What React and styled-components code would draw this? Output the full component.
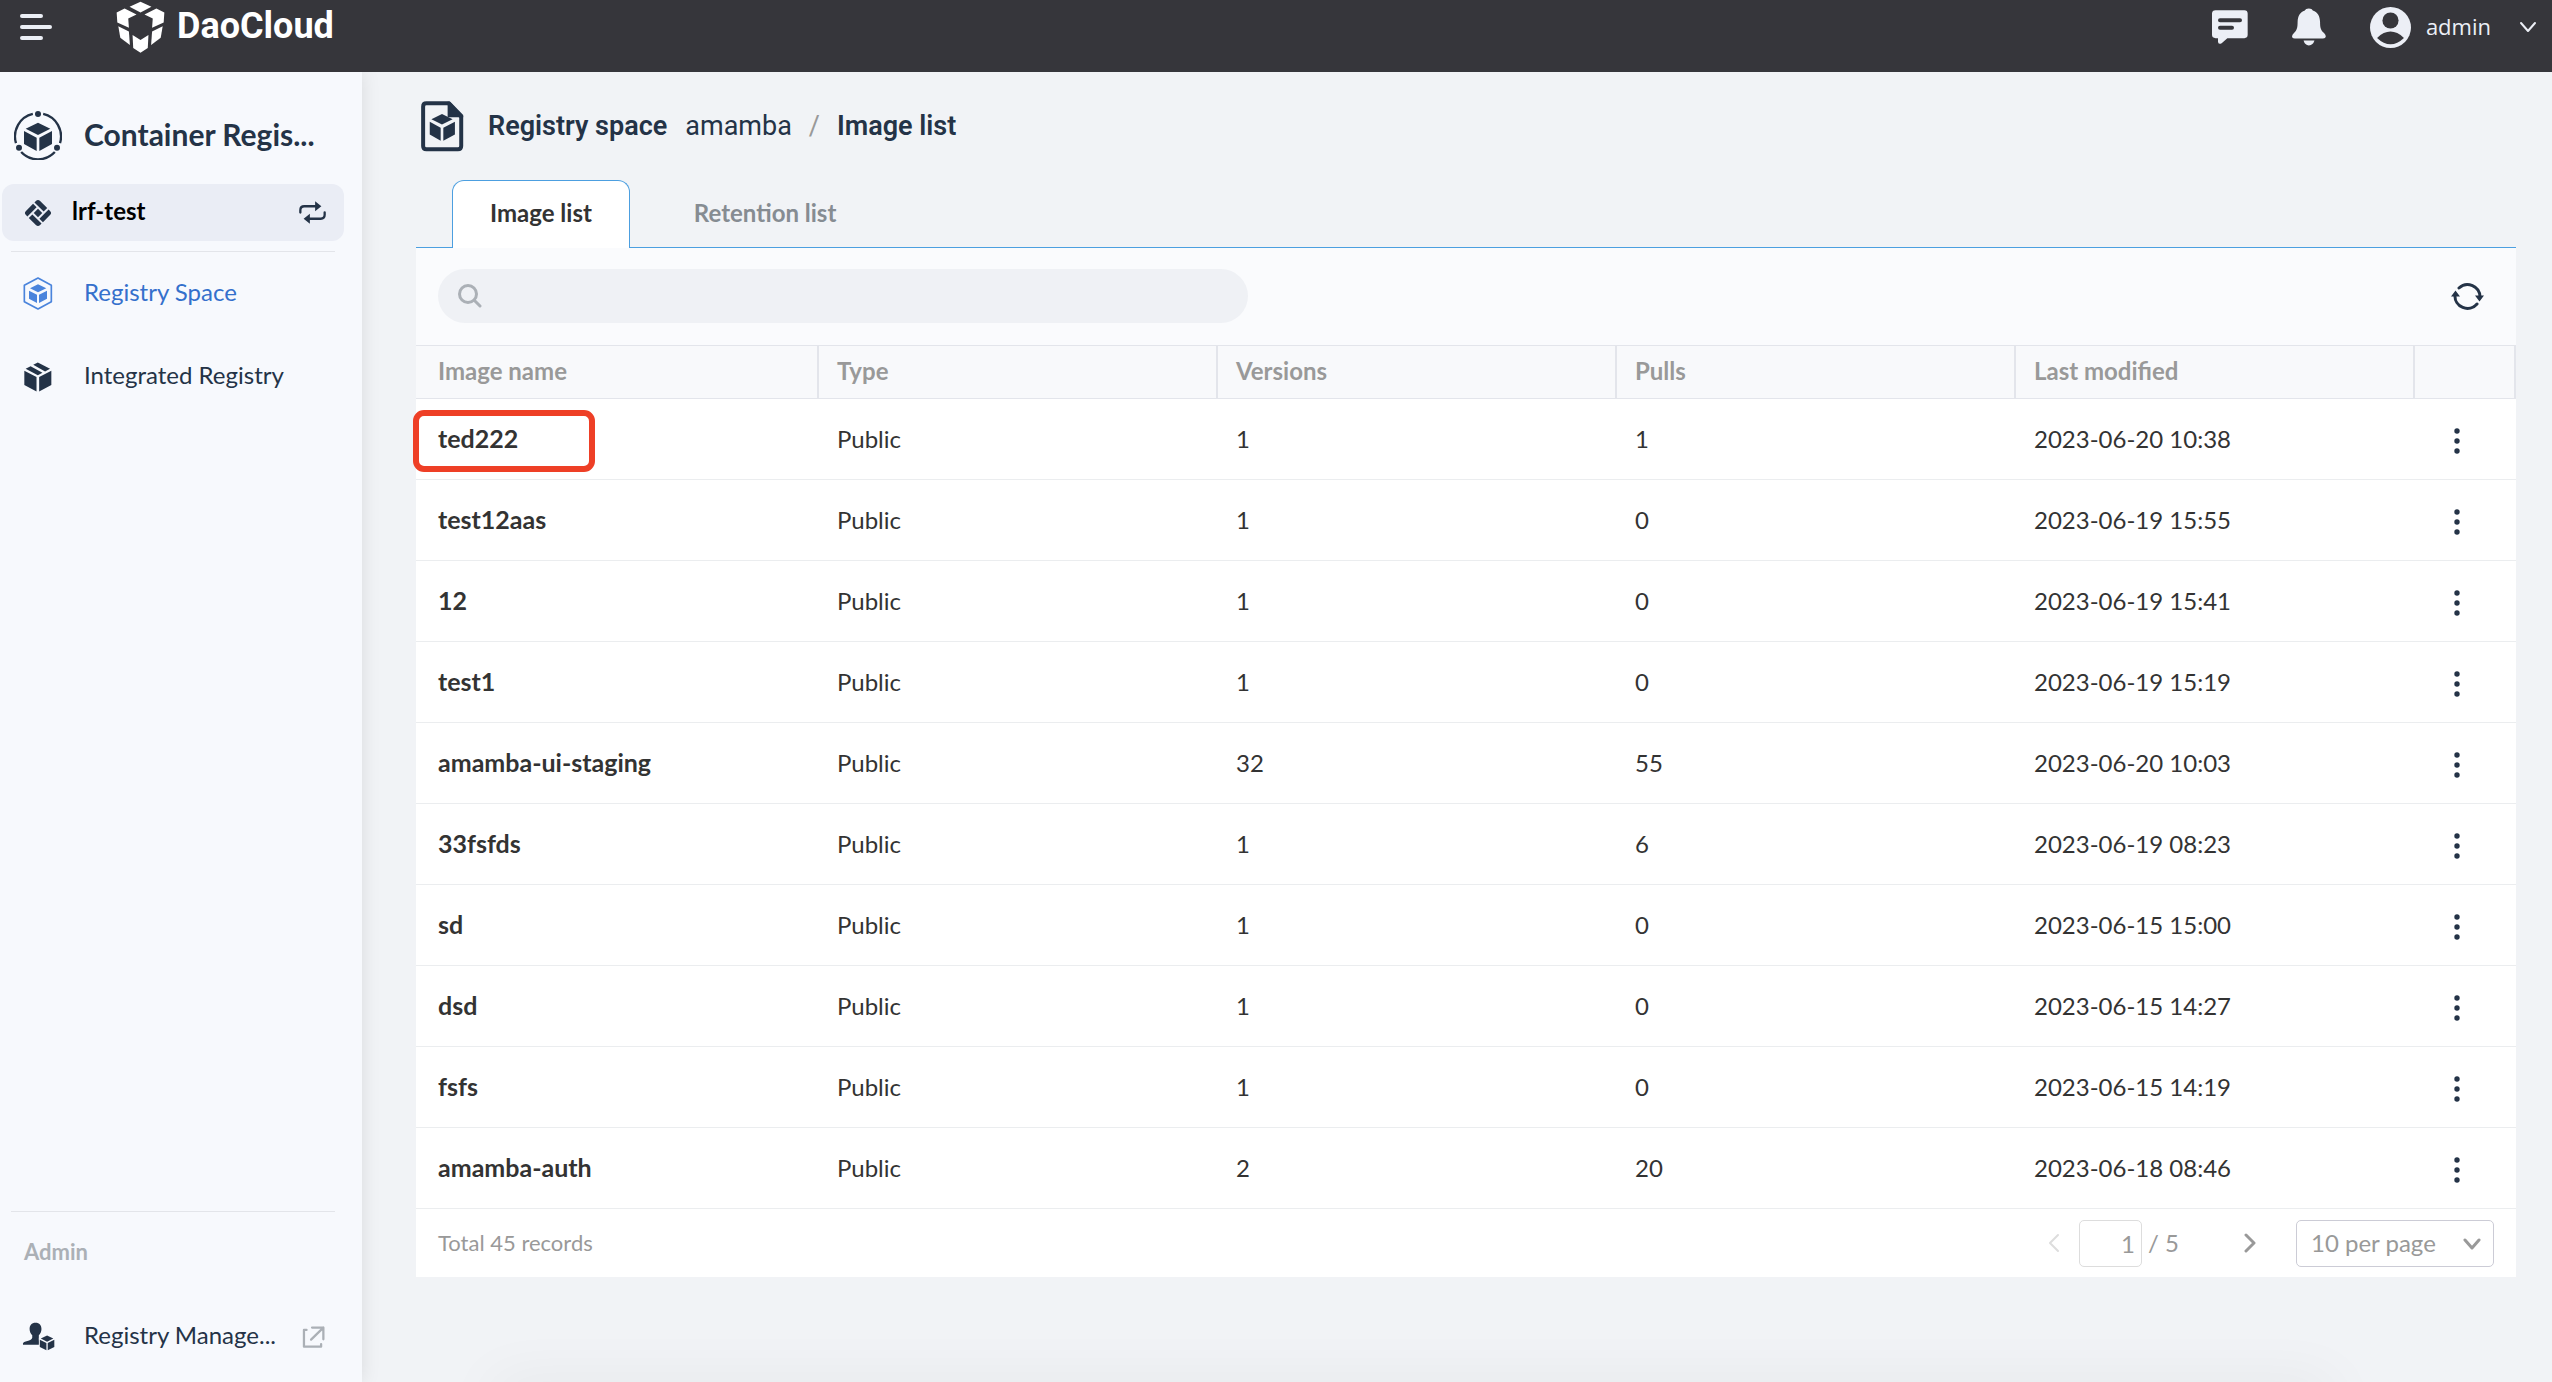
import { useState } from "react";
import styled, { createGlobalStyle } from "styled-components";

const GlobalStyle = createGlobalStyle`
  * {
    box-sizing: border-box;
  }

  body {
    margin: 0;
    background-color: #f1f3f6;
    color: #333;
    font-family: Lato, "Noto Sans", sans-serif;
    font-size: 24px;
    line-height: 32px;
  }

  button,
  input,
  select {
    padding: 0;
    border: 0;
    background: none;
    color: inherit;
    font: inherit;
  }

  button,
  select {
    cursor: pointer;
  }

  a {
    color: inherit;
    text-decoration: none;
  }

  svg {
    display: block;
    flex-shrink: 0;
  }
`;

const Page = styled.div`
  display: flex;
  flex-direction: column;
  min-height: 100vh;
`;

const TopBar = styled.header`
  position: relative;
  z-index: 2;
  display: flex;
  align-items: center;
  height: 72px;
  padding: 0 15px 18px 20px;
  background-color: #36363b;
  color: #eceff6;
`;

const Label = styled.span`
  padding-bottom: 3px;
`;

const Brand = styled.a`
  display: flex;
  align-items: center;
  gap: 12px;
  margin-left: 64px;
  color: #fff;
  font-family: Roboto, sans-serif;
  font-size: 36px;
  font-weight: 700;
`;

const TopActions = styled.div`
  display: flex;
  align-items: center;
  gap: 44px;
  margin-left: auto;
`;

const UserMenu = styled.button`
  display: flex;
  align-items: center;
  gap: 15px;
  font-family: "Open Sans", sans-serif;
  font-size: 22px;

  svg:last-child {
    margin-left: 13px;
  }
`;

const Body = styled.div`
  display: flex;
  flex: 1;
`;

const Sidebar = styled.aside`
  position: relative;
  z-index: 1;
  display: flex;
  flex-direction: column;
  flex-shrink: 0;
  width: 362px;
  padding-bottom: 4px;
  background-color: #f7f9fd;
  box-shadow: 0 0 18px rgba(0, 0, 0, 0.1);
  color: #243347;

  hr {
    width: 324px;
    margin: 0 0 0 11px;
    border: 0;
    border-top: 1px solid #e3e5ea;
  }
`;

const IconSlot = styled.span`
  display: flex;
  justify-content: center;
  flex-shrink: 0;
  width: ${(props) => props.$width || 76}px;
`;

const SidebarTitle = styled.div`
  display: flex;
  align-items: center;
  gap: 8px;
  height: 112px;
  padding-top: 14px;
  font-size: 30px;
  font-weight: 700;
`;

const Workspace = styled.button`
  display: flex;
  align-items: center;
  width: 342px;
  height: 57px;
  margin: 0 0 10px 2px;
  padding: 0 18px 0 2px;
  border-radius: 12px;
  background-color: #eaedf5;
  color: #000;
  font-weight: 700;

  svg {
    color: #243347;
  }

  > svg {
    margin-left: auto;
  }
`;

const NavLink = styled.a`
  display: flex;
  align-items: center;
  gap: 8px;
  height: 83px;
  padding-right: 37px;
  color: ${(props) => (props.$active ? "#3470cc" : "#243347")};

  > svg {
    margin-left: auto;
    color: #abb0b6;
  }
`;

const SidebarBottom = styled.div`
  margin-top: auto;

  .group {
    height: 83px;
    padding: 0 24px;
    color: #abb0b6;
    font-size: 22px;
    font-weight: 700;
    line-height: 80px;
  }
`;

const Main = styled.main`
  position: relative;
  flex: 1;
  min-width: 0;
  overflow: hidden;
  padding: 0 36px 0 54px;

  &::after {
    content: "";
    position: absolute;
    right: 10%;
    bottom: -40px;
    left: 6%;
    height: 40px;
    box-shadow: 0 0 60px rgba(0, 0, 0, 0.06);
  }
`;

const Breadcrumb = styled.nav`
  display: flex;
  align-items: center;
  height: 108px;
  padding-left: 5px;
  color: #243347;
  font-family: Roboto, sans-serif;
  font-size: 27px;

  strong {
    font-weight: 600;
  }

  .section {
    margin: 0 18px 0 24px;
  }

  .slash {
    margin: 0 17px;
    color: #999;
  }
`;

const Tabs = styled.div`
  display: flex;
  gap: 26px;
  height: 68px;
  padding-left: 36px;
  border-bottom: 1px solid #4c9fe0;
`;

const Tab = styled.button`
  height: 68px;
  padding: 0 37px 3px;
  border: 1px solid ${(props) => (props.$active ? "#4c9fe0" : "transparent")};
  border-bottom: 0;
  border-radius: 12px 12px 0 0;
  background-color: ${(props) => (props.$active ? "#fff" : "transparent")};
  color: ${(props) => (props.$active ? "#333" : "#868c92")};
  font-weight: 700;
`;

const Toolbar = styled.div`
  display: flex;
  align-items: center;
  justify-content: space-between;
  height: 97px;
  padding: 0 32px 2px 22px;
  background-color: #fafbfd;
  color: #243347;
`;

const SearchBox = styled.label`
  display: flex;
  align-items: center;
  gap: 14px;
  width: 810px;
  height: 54px;
  padding: 0 20px;
  border-radius: 27px;
  background-color: #eff1f5;
  color: #abb0b6;

  input {
    flex: 1;
    outline: none;
    color: #333;
  }
`;

const Table = styled.table`
  width: 100%;
  border-spacing: 0;
  background-color: #fff;
  table-layout: fixed;
  text-align: left;

  th {
    height: 54px;
    padding: 0 18px 2px;
    border: solid #e3e5eb;
    border-width: 1px 2px 1px 0;
    background-color: #f8f9fb;
    color: #999;
    font-weight: 700;
  }

  td {
    height: 81px;
    padding: 0 18px 1px;
    border-bottom: 1px solid #ebedef;
  }

  th:first-child {
    width: 403px;
  }

  th:last-child {
    width: 101px;
  }

  th:first-child,
  td:first-child {
    position: relative;
    padding-left: 22px;
  }
`;

const ImageLink = styled.a`
  font-size: 25px;
  font-weight: 700;
`;

const Marker = styled.span`
  position: absolute;
  top: 11px;
  left: -3px;
  width: 182px;
  height: 62px;
  border: 6px solid #ee3f26;
  border-radius: 11px;
`;

const MoreButton = styled.button`
  display: flex;
  align-items: center;
  justify-content: center;
  width: 48px;
  height: 48px;
  padding-top: 4px;
  color: #243347;
`;

const Footer = styled.div`
  display: flex;
  align-items: center;
  height: 68px;
  padding: 0 22px;
  background-color: #fff;
  color: #999;

  .total {
    margin-right: auto;
    font-size: 22px;
  }
`;

const PageButton = styled.button`
  display: flex;
  justify-content: center;
  width: 40px;
  color: #999;

  &:disabled {
    color: #ddd;
  }
`;

const PageInput = styled.label`
  display: flex;
  align-items: center;
  gap: 6px;
  width: 156px;
  padding-left: 5px;

  input {
    width: 63px;
    height: 47px;
    padding-right: 6px;
    border: 1px solid #ddd;
    border-radius: 5px;
    text-align: right;
  }
`;

const PageSize = styled.div`
  position: relative;
  margin-left: 26px;

  select {
    width: 198px;
    height: 47px;
    padding-left: 14px;
    border: 1px solid #ccccd6;
    border-radius: 5px;
    appearance: none;
  }

  svg {
    position: absolute;
    top: 18px;
    right: 13px;
    pointer-events: none;
  }
`;

const LogoIcon = () => (
  <svg width="49" height="52" viewBox="36 0 146 157" fill="currentColor">
    <path d="M109 2l33 15-33 18-33-18z" />
    <path d="M37 35l24-12 36 18-25 12 2 28-35-16z" />
    <path d="M181 35l-24-12-36 18 25 12-2 28 35-16z" />
    <path d="M42 76l32 16 3 41-29-22z" />
    <path d="M176 76l-32 16-3 41 29-22z" />
    <path d="M85 103l24 15 24-15-2 39-22 14-22-14z" />
  </svg>
);

const MenuIcon = () => (
  <svg width="32" height="26" viewBox="0 0 32 26" stroke="currentColor" strokeWidth="4" strokeLinecap="round">
    <path d="M2 2h19M2 13h28M2 24h19" />
  </svg>
);

const ChatIcon = () => (
  <svg width="36" height="34" viewBox="96 36 108 101" fill="currentColor">
    <path d="M107 36h86q10 0 10 10v64q0 10-10 10h-51l-17 15q-11 5-11-5v-10h-7q-11 0-11-10V46q0-10 11-10z" />
    <path d="M120 66h60M120 89h36" stroke="#36363b" strokeWidth="12" strokeLinecap="round" />
  </svg>
);

const BellIcon = () => (
  <svg width="34" height="38" viewBox="336 24 103 114" fill="currentColor">
    <path d="M387 25c7 0 10 3 12 6 16 6 21 18 22 34 0 18 2 26 12 34q8 8 4 14-2 3-8 3h-84q-6 0-8-3-3-7 5-14c9-8 11-16 11-34 1-16 6-28 22-34 2-3 5-6 12-6z" />
    <path d="M371 122h33q-4 14-17 15-12-1-16-15z" />
  </svg>
);

const UserIcon = () => (
  <svg width="41" height="41" viewBox="569 17 122 122">
    <circle cx="630" cy="78" r="61" fill="currentColor" />
    <circle cx="630" cy="57" r="24" fill="#36363b" />
    <path d="M590 109q40-38 80 0-40 38-80 0z" fill="#36363b" />
  </svg>
);

const RegistryIcon = () => (
  <svg width="48" height="49" viewBox="42 331 144 147" fill="currentColor">
    <path
      d="M129.500 339.800A69 69 0 0 1 180 427.200M164.500 454.100A69 69 0 0 1 63.500 454.100M48 427.200A69 69 0 0 1 98.500 339.800"
      fill="none"
      stroke="currentColor"
      strokeWidth="7"
    />
    <circle cx="114" cy="340" r="9" />
    <circle cx="57" cy="441" r="9" />
    <circle cx="171" cy="441" r="9" />
    <path d="M114 366l37 18-37 19-37-19zM72 391l38 20v40l-38-21zM156 391l-38 20v40l38-21z" />
  </svg>
);

const WorkspaceIcon = () => (
  <svg width="28" height="28" viewBox="0 0 28 28" fill="currentColor">
    <g transform="rotate(45 14 14)">
      <path d="M7 4h10v5H4V7q0-3 3-3zM19 4h2q3 0 3 3v10h-5zM11 19h13v2q0 3-3 3H11zM4 11h5v13H7q-3 0-3-3z" />
      <path d="M11 11h6v6h-6z" />
    </g>
  </svg>
);

const SwapIcon = () => (
  <svg width="27" height="23" viewBox="894 599 82 70" fill="currentColor">
    <path
      d="M898 634v-7q0-12 12-12h36M972 634v7q0 12-12 12h-36"
      fill="none"
      stroke="currentColor"
      strokeWidth="7"
      strokeLinecap="round"
    />
    <path d="M943 600l19 15-19 15zM927 638l-19 15 19 15z" />
  </svg>
);

const SpaceIcon = () => (
  <svg width="30" height="33" viewBox="69 109 90 99" fill="#4a84dc">
    <path
      d="M114 112l40 22v49l-40 22-41-22v-49z"
      fill="none"
      stroke="#4a84dc"
      strokeWidth="5"
      strokeLinejoin="round"
    />
    <path d="M114 131l25 12-25 12-24-12zM87 150l24 12v25l-24-13zM141 150l-24 12v25l24-13z" />
  </svg>
);

const BoxIcon = () => (
  <svg width="28" height="30" viewBox="72 362 85 90" fill="currentColor">
    <path d="M73 388l37 19v44l-37-20zM155 388l-37 19v44l37-20z" />
    <path d="M77 382l15-8 36 20-14 8zM100 370l14-7 37 19-15 8z" />
  </svg>
);

const ManagerIcon = () => (
  <svg width="33" height="29" viewBox="64 402 98 88" fill="currentColor">
    <path d="M104 404c12 0 18 8 18 19 0 8-3 14-8 19v7c-1 6 1 8 0 22H66q-2-8 8-10c12-3 19-5 20-11v-8c-5-5-8-11-8-19 0-11 6-19 18-19z" />
    <path d="M139 443l19 9-19 10-19-10zM117 456l20 10v22l-20-10zM161 456l-20 10v22l20-10z" />
  </svg>
);

const ExternalIcon = () => (
  <svg
    width="23"
    height="22"
    viewBox="905 404 69 68"
    fill="none"
    stroke="currentColor"
    strokeWidth="7"
    strokeLinecap="round"
    strokeLinejoin="round"
  >
    <path d="M918 416h-8v52h53v-8M935 409h35v36M970 409l-38 37" />
  </svg>
);

const FileIcon = () => (
  <svg width="43" height="51" viewBox="35 18 129 154" fill="currentColor">
    <path
      d="M56 25h62l38 41v88q0 10-10 10H51q-10 0-10-10V35q0-10 10-10z"
      fill="none"
      stroke="currentColor"
      strokeWidth="12"
    />
    <path d="M115 20h8l39 40v7h-47z" />
    <path d="M98 57l32 16-32 16-32-16zM61 81l33 18v39l-33-19zM137 81l-35 18v39l35-19z" />
  </svg>
);

const SearchIcon = () => (
  <svg width="24" height="24" viewBox="0 0 24 24" fill="none" stroke="currentColor" strokeWidth="3" strokeLinecap="round">
    <circle cx="10" cy="10" r="8.500" />
    <path d="M17 17l5 5" />
  </svg>
);

const RefreshIcon = () => (
  <svg width="33" height="28" viewBox="0 0 33 28" fill="currentColor">
    <g fill="none" stroke="currentColor" strokeWidth="3" strokeLinecap="round">
      <path d="M8 6a12.500 12.500 0 0 1 21 9M26 22A12.500 12.500 0 0 1 4 13" />
    </g>
    <path d="M24 13.500h9l-4.500 6zM0 14.500h9l-4.500-6z" />
  </svg>
);

const MoreIcon = () => (
  <svg width="6" height="26" viewBox="0 0 6 26" fill="currentColor">
    <circle cx="3" cy="3" r="2.700" />
    <circle cx="3" cy="13" r="2.700" />
    <circle cx="3" cy="23" r="2.700" />
  </svg>
);

const arrows = {
  down: { width: 18, height: 12, d: "M2 2l7 8 7-8" },
  left: { width: 12, height: 20, d: "M10 2l-8 8 8 8" },
  right: { width: 12, height: 20, d: "M2 2l8 8-8 8" },
};

const Arrow = ({ type, stroke = 2 }) => {
  const { width, height, d } = arrows[type];

  return (
    <svg
      width={width}
      height={height}
      viewBox={`0 0 ${width} ${height}`}
      fill="none"
      stroke="currentColor"
      strokeWidth={stroke}
      strokeLinecap="round"
      strokeLinejoin="round"
    >
      <path d={d} />
    </svg>
  );
};

const tabs = ["Image list", "Retention list"];

const images = [
  { name: "ted222", versions: 1, pulls: 1, modified: "2023-06-20 10:38", marked: true },
  { name: "test12aas", versions: 1, pulls: 0, modified: "2023-06-19 15:55" },
  { name: "12", versions: 1, pulls: 0, modified: "2023-06-19 15:41" },
  { name: "test1", versions: 1, pulls: 0, modified: "2023-06-19 15:19" },
  { name: "amamba-ui-staging", versions: 32, pulls: 55, modified: "2023-06-20 10:03" },
  { name: "33fsfds", versions: 1, pulls: 6, modified: "2023-06-19 08:23" },
  { name: "sd", versions: 1, pulls: 0, modified: "2023-06-15 15:00" },
  { name: "dsd", versions: 1, pulls: 0, modified: "2023-06-15 14:27" },
  { name: "fsfs", versions: 1, pulls: 0, modified: "2023-06-15 14:19" },
  { name: "amamba-auth", versions: 2, pulls: 20, modified: "2023-06-18 08:46" },
];

const App = () => {
  const [activeTab, setActiveTab] = useState("Image list");

  const imageRows = images.map((image) => (
    <tr key={image.name}>
      <td>
        <ImageLink href="#">{image.name}</ImageLink>
        {image.marked && <Marker />}
      </td>
      <td>Public</td>
      <td>{image.versions}</td>
      <td>{image.pulls}</td>
      <td>{image.modified}</td>
      <td>
        <MoreButton aria-label={`Actions for ${image.name}`}>
          <MoreIcon />
        </MoreButton>
      </td>
    </tr>
  ));

  return (
    <Page>
      <GlobalStyle />
      <TopBar>
        <button aria-label="Menu">
          <MenuIcon />
        </button>
        <Brand href="#">
          <LogoIcon />
          <Label>DaoCloud</Label>
        </Brand>
        <TopActions>
          <button aria-label="Messages">
            <ChatIcon />
          </button>
          <button aria-label="Notifications">
            <BellIcon />
          </button>
          <UserMenu>
            <UserIcon />
            <Label>admin</Label>
            <Arrow type="down" />
          </UserMenu>
        </TopActions>
      </TopBar>
      <Body>
        <Sidebar>
          <SidebarTitle>
            <IconSlot>
              <RegistryIcon />
            </IconSlot>
            <Label>Container Regis...</Label>
          </SidebarTitle>
          <Workspace>
            <IconSlot $width={68}>
              <WorkspaceIcon />
            </IconSlot>
            <Label>lrf-test</Label>
            <SwapIcon />
          </Workspace>
          <hr />
          <nav>
            <NavLink href="#" $active>
              <IconSlot>
                <SpaceIcon />
              </IconSlot>
              <Label>Registry Space</Label>
            </NavLink>
            <NavLink href="#">
              <IconSlot>
                <BoxIcon />
              </IconSlot>
              <Label>Integrated Registry</Label>
            </NavLink>
          </nav>
          <SidebarBottom>
            <hr />
            <div className="group">Admin</div>
            <NavLink href="#">
              <IconSlot>
                <ManagerIcon />
              </IconSlot>
              <Label>Registry Manage...</Label>
              <ExternalIcon />
            </NavLink>
          </SidebarBottom>
        </Sidebar>
        <Main>
          <Breadcrumb>
            <FileIcon />
            <strong className="section">Registry space</strong>
            <a href="#">amamba</a>
            <span className="slash">/</span>
            <strong>Image list</strong>
          </Breadcrumb>
          <Tabs role="tablist">
            {tabs.map((tab) => (
              <Tab
                key={tab}
                role="tab"
                aria-selected={tab === activeTab}
                $active={tab === activeTab}
                onClick={() => setActiveTab(tab)}
              >
                {tab}
              </Tab>
            ))}
          </Tabs>
          <Toolbar>
            <SearchBox>
              <SearchIcon />
              <input type="text" aria-label="Search images" />
            </SearchBox>
            <button aria-label="Refresh">
              <RefreshIcon />
            </button>
          </Toolbar>
          <Table>
            <thead>
              <tr>
                <th>Image name</th>
                <th>Type</th>
                <th>Versions</th>
                <th>Pulls</th>
                <th>Last modified</th>
                <th aria-label="Actions"></th>
              </tr>
            </thead>
            <tbody>{imageRows}</tbody>
          </Table>
          <Footer>
            <span className="total">Total 45 records</span>
            <PageButton aria-label="Previous page" disabled>
              <Arrow type="left" />
            </PageButton>
            <PageInput>
              <input type="text" aria-label="Page" defaultValue="1" />
              / 5
            </PageInput>
            <PageButton aria-label="Next page">
              <Arrow type="right" stroke={3} />
            </PageButton>
            <PageSize>
              <select aria-label="Page size">
                <option>10 per page</option>
                <option>20 per page</option>
                <option>50 per page</option>
              </select>
              <Arrow type="down" stroke={3} />
            </PageSize>
          </Footer>
        </Main>
      </Body>
    </Page>
  );
};

export default App;
